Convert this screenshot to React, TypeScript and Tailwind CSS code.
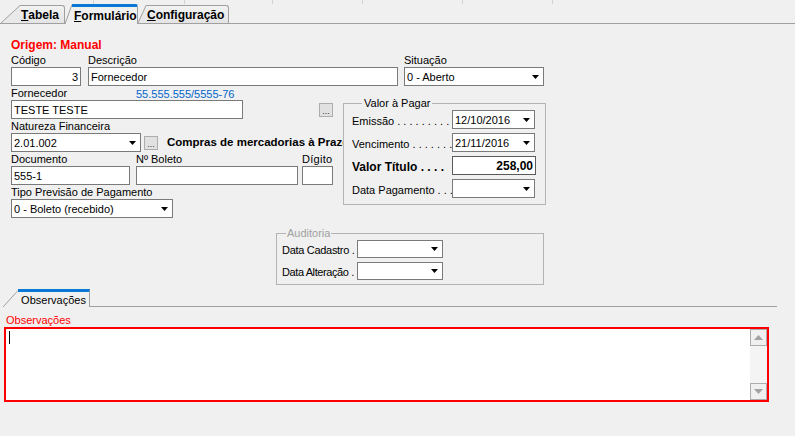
import React from "react";

function Arrow({ color = "#000" }: { color?: string }) {
  return (
    <svg width="7" height="4" viewBox="0 0 7 4" className="block">
      <polygon points="0,0 7,0 3.5,4" fill={color} />
    </svg>
  );
}

function Combo({ w, h = "h-[19px]", value }: { w: string; h?: string; value?: string }) {
  return (
    <div className={`flex shrink-0 items-center border border-[#7a7a7a] bg-white ${w} ${h}`}>
      <span className="min-w-0 flex-1 whitespace-nowrap pl-[2px] leading-[14px]">{value}</span>
      <span className="flex w-[15px] shrink-0 justify-center">
        <Arrow />
      </span>
    </div>
  );
}

function TextBox({
  w,
  value,
  right = false,
  bold = false,
  dark = false,
}: {
  w: string;
  value?: string;
  right?: boolean;
  bold?: boolean;
  dark?: boolean;
}) {
  return (
    <div
      className={`flex h-[19px] shrink-0 items-center bg-white px-[2px] leading-[14px] ${w} ${
        right ? "justify-end" : ""
      } ${bold ? "text-[12px] font-bold" : ""} ${dark ? "border border-[#5a5a5a]" : "border border-[#7a7a7a]"}`}
    >
      {value}
    </div>
  );
}

function DotsBtn() {
  return (
    <div className="flex h-[14px] w-[14px] shrink-0 items-end justify-center border border-[#adadad] bg-[#e1e1e1] pb-[1px] text-[9px] leading-[8px] text-[#333]">
      ...
    </div>
  );
}

function Slant({ w, h, fill }: { w: number; h: number; fill: string }) {
  return (
    <svg width={w} height={h} className="block shrink-0">
      <polygon points={`0,${h} ${w},0 ${w},${h}`} fill={fill} />
      <line x1="0" y1={h} x2={w} y2="0.5" stroke="#a0a0a0" strokeWidth="1" />
    </svg>
  );
}

function Tab({
  label,
  w,
  slant,
  active = false,
}: {
  label: string;
  w: string;
  slant: number;
  active?: boolean;
}) {
  if (active) {
    return (
      <div className="relative z-10 -mb-px flex items-end">
        <Slant w={slant} h={20} fill="#f0f0f0" />
        <div
          className={`flex h-[20px] items-center rounded-tr-[2px] border-t-[3px] border-r border-t-[#0a78d6] border-r-[#a0a0a0] bg-[#f0f0f0] pl-[2px] text-[12px] font-bold ${w}`}
        >
          <span className="underline underline-offset-[1px]">{label[0]}</span>
          {label.slice(1)}
        </div>
      </div>
    );
  }
  return (
    <div className="flex items-end">
      <Slant w={slant} h={18} fill="#e9e9e9" />
      <div
        className={`flex h-[18px] items-center rounded-tr-[3px] border-t border-r border-[#a0a0a0] bg-gradient-to-b from-[#f2f2f2] to-[#e4e4e4] pl-[1px] pt-[1px] text-[12px] font-bold ${w}`}
      >
        <span className="underline underline-offset-[1px]">{label[0]}</span>
        {label.slice(1)}
      </div>
    </div>
  );
}

function GroupRow({ label, bold = false, children }: { label: string; bold?: boolean; children: React.ReactNode }) {
  return (
    <div className="flex h-[19px] items-center">
      <span
        className={`w-[100px] shrink-0 whitespace-nowrap pt-[3px] leading-[14px] ${
          bold ? "text-[12px] font-bold" : ""
        }`}
      >
        {label}
      </span>
      {children}
    </div>
  );
}

export default function App() {
  return (
    <div className="h-[436px] w-[795px] overflow-hidden bg-[#f0f0f0] font-['Liberation_Sans',Arial,sans-serif] text-[11px] text-black">
      {/* restos da grade acima */}
      <div className="flex h-[4px]">
        <div className="w-[94px] border-r border-[#d2d2d2]" />
        <div className="w-[91px] border-r border-[#d2d2d2]" />
        <div className="w-[88px] border-r border-[#d2d2d2]" />
        <div className="w-[90px] border-r border-[#d2d2d2]" />
        <div className="w-[100px] border-r border-[#d2d2d2]" />
        <div className="w-[90px] border-r border-[#d2d2d2]" />
      </div>

      {/* abas */}
      <div className="flex h-[20px] items-end border-b border-[#a0a0a0] pl-[1px]">
        <Tab label="Tabela" w="w-[45px]" slant={19} />
        <Tab label="Formulário" w="w-[66px]" slant={7} active />
        <Tab label="Configuração" w="w-[83px]" slant={8} />
      </div>

      <div className="pl-[11px]">
        <div className="mt-[14px] h-[14px] text-[12px] font-bold leading-[14px] text-[#ff0000]">Origem: Manual</div>

        {/* código / descrição / situação */}
        <div className="mt-[1px] flex">
          <div className="w-[70px]">
            <div className="h-[14px] leading-[14px]">Código</div>
            <TextBox w="w-[70px]" value="3" right />
          </div>
          <div className="ml-[7px] w-[310px]">
            <div className="h-[14px] leading-[14px]">Descrição</div>
            <TextBox w="w-[310px]" value="Fornecedor" />
          </div>
          <div className="ml-[6px] w-[140px]">
            <div className="h-[14px] leading-[14px]">Situação</div>
            <Combo w="w-[140px]" value="0 - Aberto" />
          </div>
        </div>

        <div className="flex">
          {/* coluna esquerda */}
          <div className="w-[332px] shrink-0 overflow-hidden">
            <div className="flex h-[14px] leading-[14px]">
              <span className="w-[125px]">Fornecedor</span>
              <span className="pt-[1px] text-[#0066cc]">55.555.555/5555-76</span>
            </div>
            <div className="flex items-center">
              <TextBox w="w-[232px]" value="TESTE TESTE" />
              <div className="ml-[76px]">
                <DotsBtn />
              </div>
            </div>

            <div className="h-[14px] leading-[14px]">Natureza Financeira</div>
            <div className="flex items-center">
              <Combo w="w-[130px]" value="2.01.002" />
              <div className="ml-[3px]">
                <DotsBtn />
              </div>
              <span className="ml-[9px] whitespace-nowrap text-[11.5px] font-bold">Compras de mercadorias à Prazo</span>
            </div>

            <div className="flex h-[14px] leading-[14px]">
              <span className="w-[125px]">Documento</span>
              <span className="w-[166px]">Nº Boleto</span>
              <span className="tracking-[0.3px]">Dígito</span>
            </div>
            <div className="flex">
              <TextBox w="w-[119px]" value="555-1" />
              <div className="ml-[6px]">
                <TextBox w="w-[162px]" />
              </div>
              <div className="ml-[4px]">
                <TextBox w="w-[31px]" />
              </div>
            </div>

            <div className="h-[14px] leading-[14px]">Tipo Previsão de Pagamento</div>
            <Combo w="w-[162px]" value="0 - Boleto (recebido)" />
          </div>

          {/* valor à pagar */}
          <fieldset className="mt-[10px] w-[203px] self-start border border-[#b4b4b4] px-[8px] pb-[6px]">
            <legend className="ml-[10px] px-[2px] leading-[14px]">Valor à Pagar</legend>
            <div className="flex flex-col gap-[4px]">
              <GroupRow label="Emissão . . . . . . . . .">
                <Combo w="w-[83px]" value="12/10/2016" />
              </GroupRow>
              <GroupRow label="Vencimento . . . . . . .">
                <Combo w="w-[83px]" value="21/11/2016" />
              </GroupRow>
              <GroupRow label="Valor Título . . . ." bold>
                <TextBox w="w-[84px]" value="258,00" right bold dark />
              </GroupRow>
              <GroupRow label="Data Pagamento . . .">
                <Combo w="w-[83px]" />
              </GroupRow>
            </div>
          </fieldset>
        </div>

        {/* auditoria */}
        <fieldset className="ml-[265px] mt-[8px] w-[268px] border border-[#b4b4b4] pb-[4px] pl-[5px]">
          <legend className="ml-[4px] px-[1px] leading-[14px] text-[#a0a0a0]">Auditoria</legend>
          <div className="flex flex-col gap-[4px]">
            <div className="flex h-[18px] items-center">
              <span className="w-[75px] whitespace-nowrap pt-[2px] tracking-[-0.3px]">Data Cadastro .</span>
              <Combo w="w-[86px]" h="h-[18px]" />
            </div>
            <div className="flex h-[18px] items-center">
              <span className="w-[75px] whitespace-nowrap pt-[2px] tracking-[-0.4px]">Data Alteração .</span>
              <Combo w="w-[86px]" h="h-[18px]" />
            </div>
          </div>
        </fieldset>
      </div>

      {/* aba observações */}
      <div className="mt-[4px] flex h-[18px] w-[777px] items-end">
        <div className="w-[3px]" />
        <Slant w={15} h={17} fill="#f0f0f0" />
        <div className="flex h-[18px] w-[72px] items-center justify-center border-t-[3px] border-r border-t-[#0a78d6] border-r-[#a0a0a0] bg-[#f0f0f0] pt-[1px]">
          Observações
        </div>
        <div className="h-px flex-1 bg-[#a0a0a0]" />
      </div>

      <div className="ml-[6px] mt-[7px] h-[13px] leading-[13px] text-[#ff0000]">Observações</div>
      <div className="ml-[4px] flex h-[75px] w-[765px] border-2 border-[#ff0000] bg-white">
        <div className="flex-1">
          <div className="ml-[3px] mt-[2px] h-[13px] w-px bg-black" />
        </div>
        <div className="flex w-[17px] flex-col bg-[#f4f4f4]">
          <div className="flex h-[17px] items-center justify-center border border-[#adadad] bg-[#f0f0f0]">
            <svg width="9" height="5" viewBox="0 0 9 5" className="block">
              <polygon points="0,5 9,5 4.5,0" fill="#a3a3a3" />
            </svg>
          </div>
          <div className="flex-1" />
          <div className="flex h-[17px] items-center justify-center border border-[#adadad] bg-[#f0f0f0]">
            <svg width="9" height="5" viewBox="0 0 9 5" className="block">
              <polygon points="0,0 9,0 4.5,5" fill="#a3a3a3" />
            </svg>
          </div>
        </div>
      </div>
    </div>
  );
}
